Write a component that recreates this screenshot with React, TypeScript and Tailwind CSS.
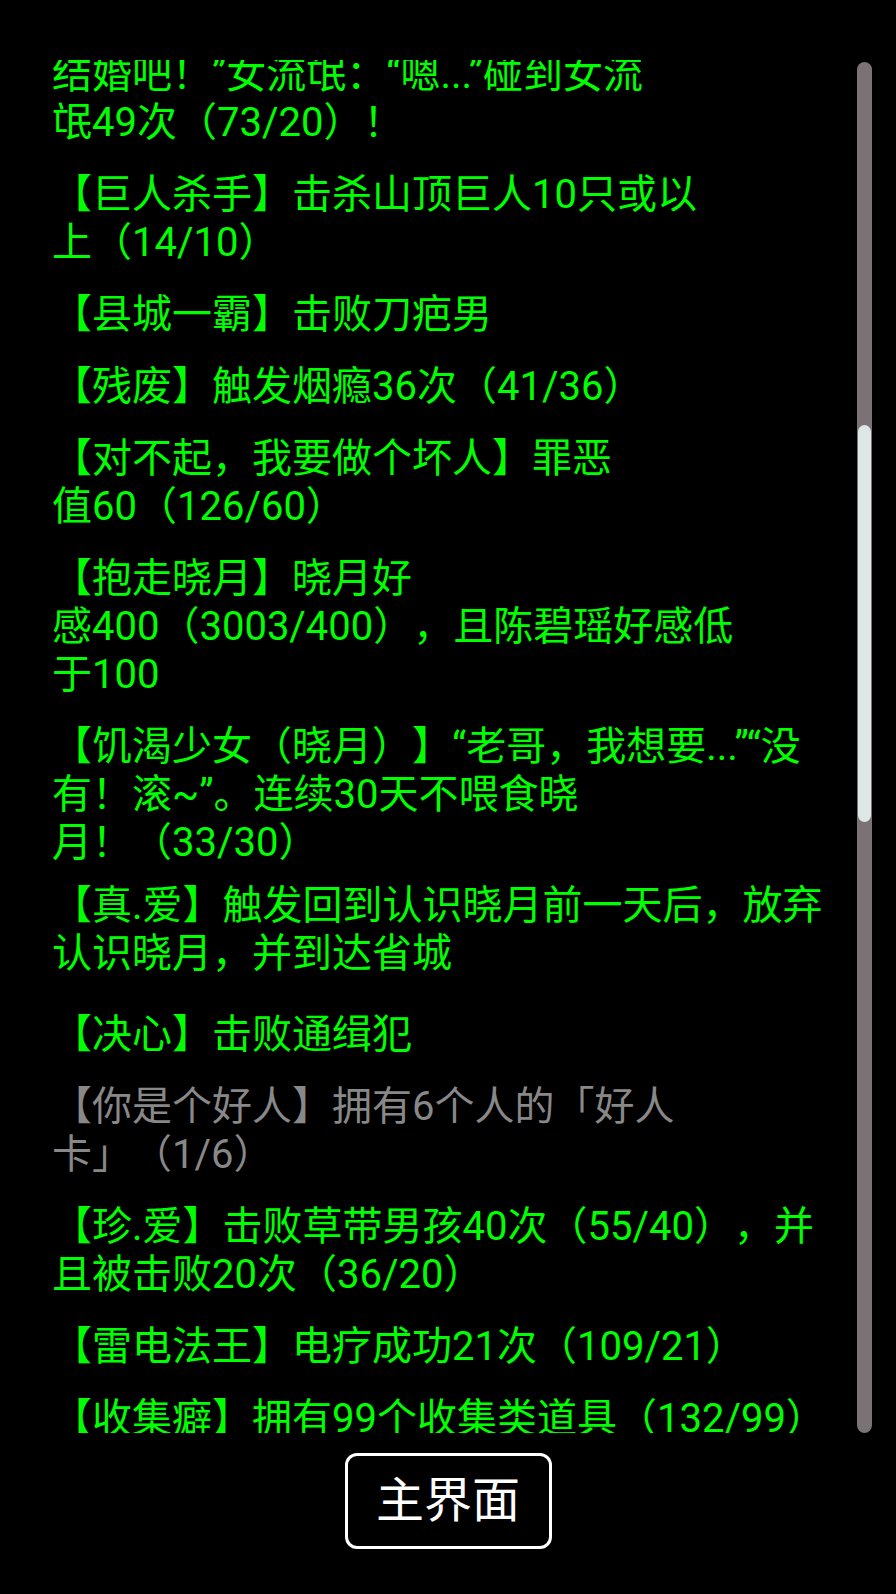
type Achievement = {
  lines: string[];
  done: boolean;
  gap: string;
};

const achievements: Achievement[] = [
  { lines: ['结婚吧！”女流氓：“嗯...”碰到女流', '氓49次（73/20）！'], done: true, gap: 'mt-0' },
  { lines: ['【巨人杀手】击杀山顶巨人10只或以', '上（14/10）'], done: true, gap: 'mt-[24px]' },
  { lines: ['【县城一霸】击败刀疤男'], done: true, gap: 'mt-[24px]' },
  { lines: ['【残废】触发烟瘾36次（41/36）'], done: true, gap: 'mt-[24px]' },
  { lines: ['【对不起，我要做个坏人】罪恶', '值60（126/60）'], done: true, gap: 'mt-[24px]' },
  { lines: ['【抱走晓月】晓月好', '感400（3003/400），且陈碧瑶好感低', '于100'], done: true, gap: 'mt-[24px]' },
  { lines: ['【饥渴少女（晓月）】“老哥，我想要...”“没', '有！滚~”。连续30天不喂食晓', '月！（33/30）'], done: true, gap: 'mt-[24px]' },
  { lines: ['【真.爱】触发回到认识晓月前一天后，放弃', '认识晓月，并到达省城'], done: true, gap: 'mt-[15px]' },
  { lines: ['【决心】击败通缉犯'], done: true, gap: 'mt-[33px]' },
  { lines: ['【你是个好人】拥有6个人的「好人', '卡」（1/6）'], done: false, gap: 'mt-[24px]' },
  { lines: ['【珍.爱】击败草带男孩40次（55/40），并', '且被击败20次（36/20）'], done: true, gap: 'mt-[24px]' },
  { lines: ['【雷电法王】电疗成功21次（109/21）'], done: true, gap: 'mt-[24px]' },
  { lines: ['【收集癖】拥有99个收集类道具（132/99）'], done: true, gap: 'mt-[24px]' },
];

export default function App() {
  return (
    <div className="w-full h-[1594px] bg-black flex flex-col font-['Roboto','Noto_Sans_CJK_SC',sans-serif] [text-spacing-trim:space-all]">
      {/* 成就列表 + 滚动条 */}
      <div className="mt-[60px] h-[1373px] flex">
        <div className="flex-1 overflow-hidden pl-[52px]">
          <div className="-mt-[9px]">
            {achievements.map((a, i) => (
              <div
                key={i}
                className={`${a.gap} text-[40px] leading-[48px] whitespace-nowrap ${a.done ? 'text-[#00ff00]' : 'text-[#888888]'}`}
              >
                {a.lines.map((line, j) => (
                  <div key={j}>{line}</div>
                ))}
              </div>
            ))}
          </div>
        </div>
        <div className="mt-[2px] w-[15px] mr-[24px] h-[1371px] rounded-full bg-[#7b7276] flex flex-col items-center">
          <div className="mt-[363px] w-[13px] h-[397px] rounded-full bg-[#dfe6e8]" />
        </div>
      </div>

      {/* 主界面按钮 */}
      <div className="mt-[20px] flex justify-center">
        <button className="w-[207px] h-[96px] rounded-[12px] border-[3px] border-white bg-black text-white text-[48px] leading-none flex items-center justify-center">
          主界面
        </button>
      </div>
    </div>
  );
}
